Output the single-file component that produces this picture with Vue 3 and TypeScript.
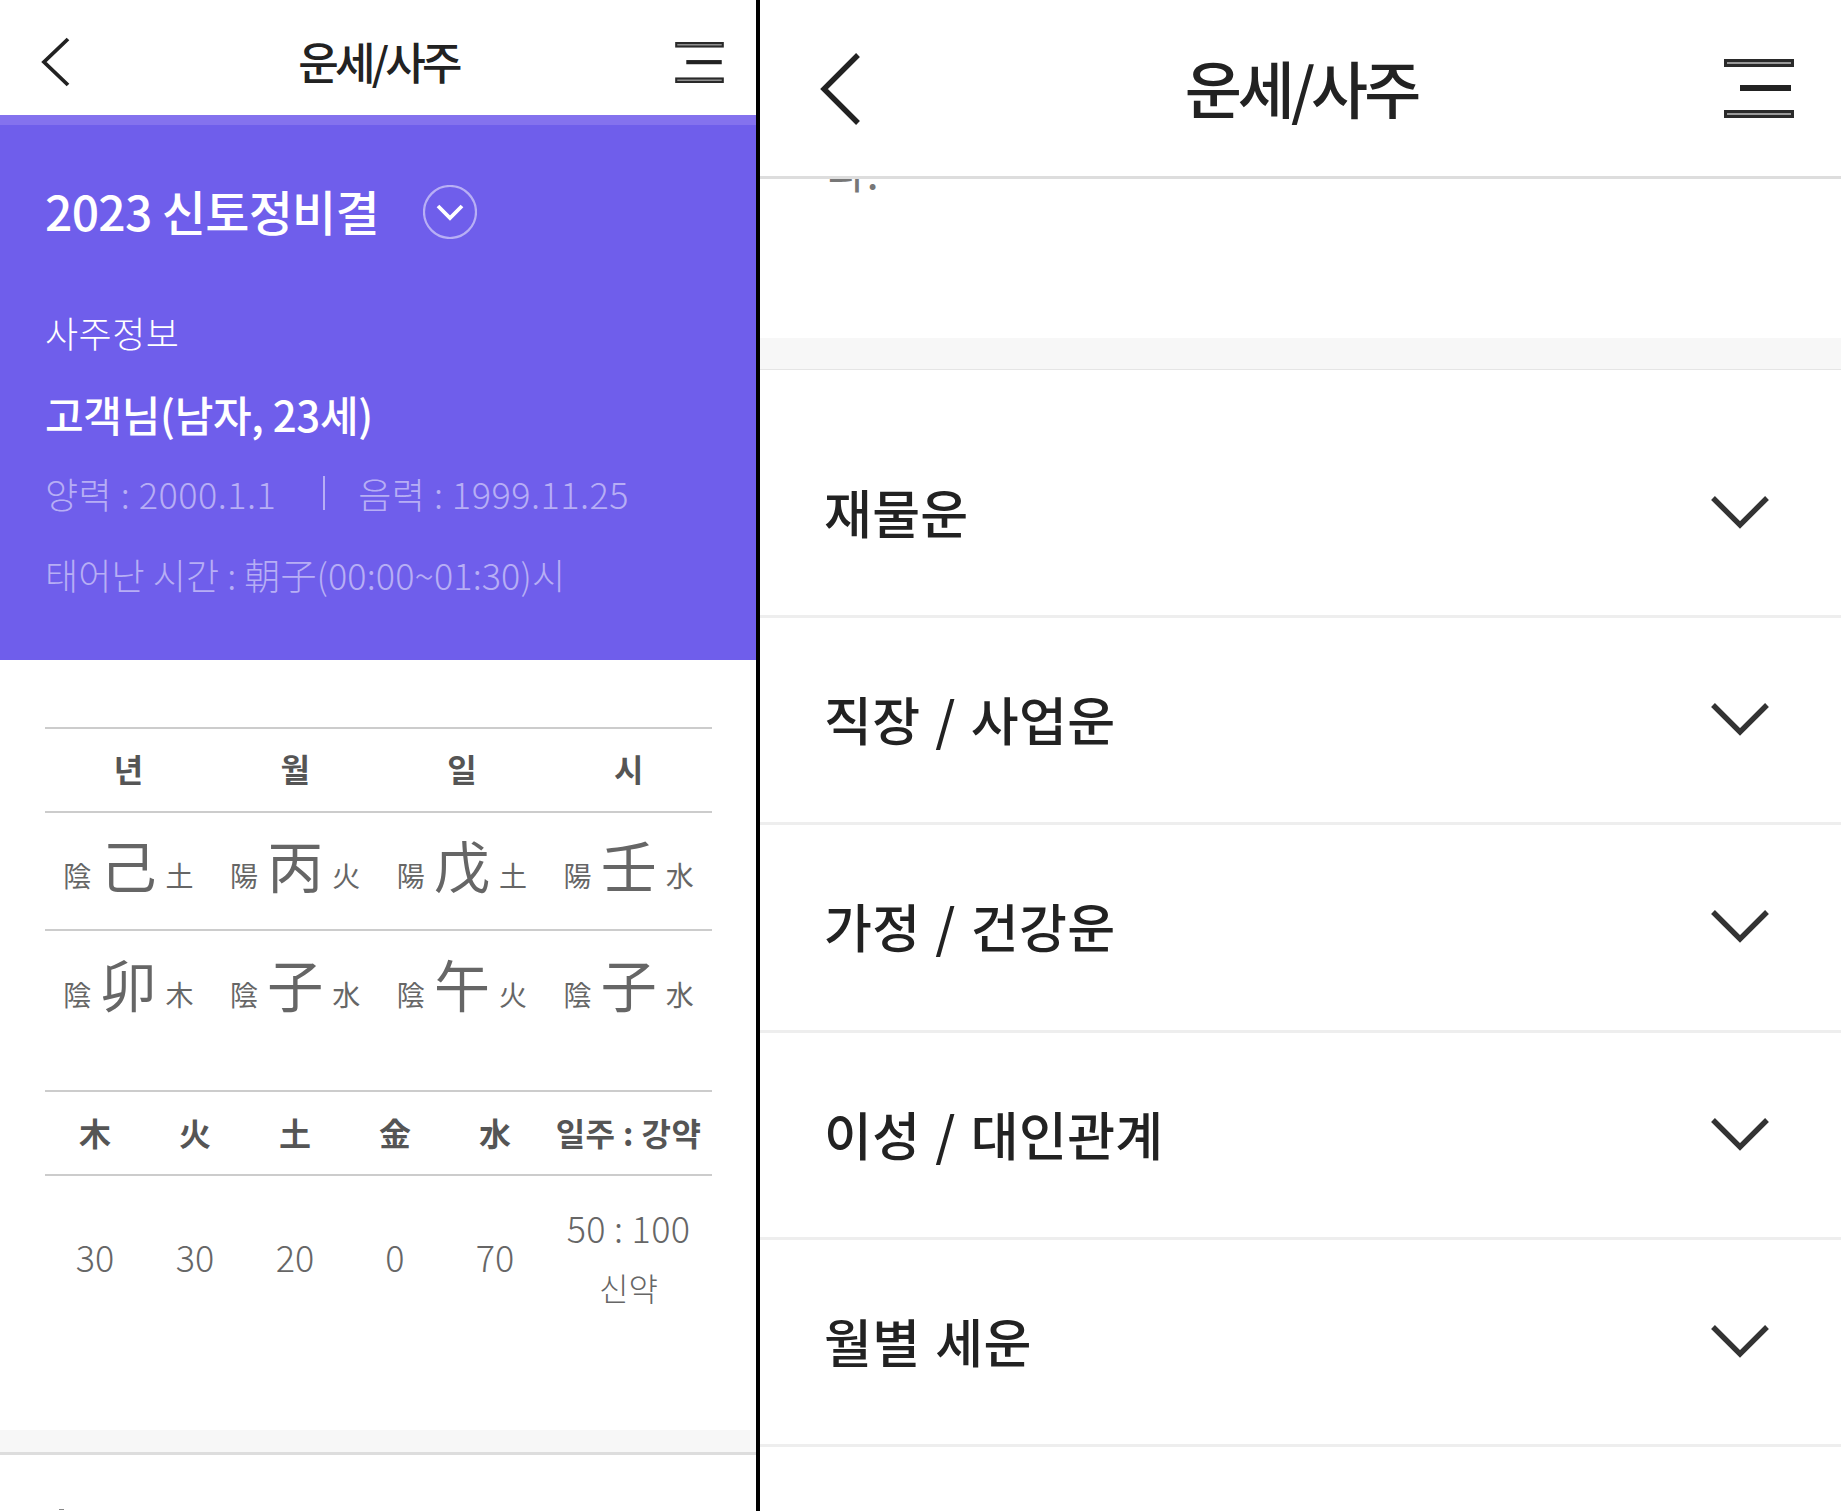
<script setup lang="ts">
interface Pillar { l: string; b: string; e: string }
interface Row { label: string }
const heads: string[] = ['년', '월', '일', '시']
const row1: Pillar[] = [
  { l: '陰', b: '己', e: '土' },
  { l: '陽', b: '丙', e: '火' },
  { l: '陽', b: '戊', e: '土' },
  { l: '陽', b: '壬', e: '水' },
]
const row2: Pillar[] = [
  { l: '陰', b: '卯', e: '木' },
  { l: '陰', b: '子', e: '水' },
  { l: '陰', b: '午', e: '火' },
  { l: '陰', b: '子', e: '水' },
]
const elements: string[] = ['木', '火', '土', '金', '水']
const scores: string[] = ['30', '30', '20', '0', '70']
const rows: Row[] = [
  { label: '재물운' },
  { label: '직장 / 사업운' },
  { label: '가정 / 건강운' },
  { label: '이성 / 대인관계' },
  { label: '월별 세운' },
]
</script>

<template>
  <div class="page">
    <section class="left">
      <header class="head-l">
        <svg class="back-l" viewBox="0 0 30 52" width="30" height="52"><path d="M27 3 L3 26 L27 49" fill="none" stroke="#222" stroke-width="3.8" /></svg>
        <h1 class="title-l">운세/사주</h1>
        <svg class="menu-l" viewBox="0 0 70 59" width="49" height="41">
          <rect x="0" y="0" width="70" height="8" fill="#2a2a2a" /><rect x="3" y="3" width="64" height="2" fill="#999" />
          <rect x="16" y="26" width="51" height="6" fill="#222" />
          <rect x="0" y="51" width="70" height="8" fill="#2a2a2a" /><rect x="3" y="54" width="64" height="2" fill="#999" />
        </svg>
      </header>
      <div class="hero">
        <div class="hero-title">
          <span>2023 신토정비결</span>
          <svg class="circle" viewBox="0 0 54 54" width="54" height="54">
            <circle cx="27" cy="27" r="26" fill="none" stroke="#b8aff5" stroke-width="2.2" />
            <path d="M15 21 L27 33 L39 21" fill="none" stroke="#fff" stroke-width="3.8" />
          </svg>
        </div>
        <p class="hero-label">사주정보</p>
        <p class="hero-name">고객님(남자, 23세)</p>
        <p class="hero-date"><span>양력 : 2000.1.1</span><i class="sep"></i><span>음력 : 1999.11.25</span></p>
        <p class="hero-time">태어난 시간 : 朝子(00:00~01:30)시</p>
      </div>
      <div class="pillars">
        <div class="p-head"><div v-for="h in heads" :key="h">{{ h }}</div></div>
        <div class="p-row first">
          <div v-for="(p, i) in row1" :key="i" class="cell"><span class="sm">{{ p.l }}</span><span class="big">{{ p.b }}</span><span class="sm">{{ p.e }}</span></div>
        </div>
        <div class="p-row second">
          <div v-for="(p, i) in row2" :key="i" class="cell"><span class="sm">{{ p.l }}</span><span class="big">{{ p.b }}</span><span class="sm">{{ p.e }}</span></div>
        </div>
      </div>
      <div class="elements">
        <div class="e-head">
          <div v-for="e in elements" :key="e">{{ e }}</div>
          <div class="e-last">일주 : 강약</div>
        </div>
        <div class="e-row">
          <div v-for="(s, i) in scores" :key="i">{{ s }}</div>
          <div class="e-stack"><span class="ratio">50 : 100</span><span class="weak">신약</span></div>
        </div>
      </div>
      <div class="band band-l"></div>
      <div class="tick"></div>
    </section>
    <section class="right">
      <header class="head-r">
        <svg class="back-r" viewBox="0 0 42 72" width="42" height="72"><path d="M38 2 L4 36 L38 70" fill="none" stroke="#222" stroke-width="5.4" /></svg>
        <h1 class="title-r">운세/사주</h1>
        <svg class="menu-r" viewBox="0 0 70 59" width="70" height="59">
          <rect x="0" y="0" width="70" height="8" fill="#2a2a2a" /><rect x="3" y="3" width="64" height="2" fill="#999" />
          <rect x="16" y="26" width="51" height="6" fill="#222" />
          <rect x="0" y="51" width="70" height="8" fill="#2a2a2a" /><rect x="3" y="54" width="64" height="2" fill="#999" />
        </svg>
      </header>
      <div class="clip"><p class="clip-text">다.</p></div>
      <div class="band band-r"></div>
      <div class="acc">
        <div v-for="r in rows" :key="r.label" class="acc-row">
          <span class="acc-label">{{ r.label }}</span>
          <svg class="chev" viewBox="0 0 60 34" width="60" height="34"><path d="M3 3 L30 30 L57 3" fill="none" stroke="#333" stroke-width="5.4" /></svg>
        </div>
      </div>
    </section>
  </div>
</template>

<style>
html, body { margin: 0; background: #fff; }
</style>

<style scoped>
* { box-sizing: border-box; }
p, h1 { margin: 0; font-weight: inherit; }
.page {
  display: flex;
  width: 1841px;
  height: 1511px;
  overflow: hidden;
  background: #fff;
  font-family: "Noto Sans CJK KR", "Noto Sans", sans-serif;
  color: #222;
}
.left { width: 756px; flex: none; }
.right { flex: 1; border-left: 4px solid #000; min-width: 0; }

.head-l { height: 115px; display: flex; align-items: center; padding: 9px 32px 0 41px; justify-content: space-between; }
.title-l { font-size: 44px; font-weight: 500; letter-spacing: -3.7px; line-height: 60px; margin: -2px 0 0 11px; }
.hero { background: #6f5eeb; border-top: 10px solid #8472ee; padding: 55px 45px 56px; color: #fff; }
.hero-title { display: flex; align-items: center; gap: 44px; font-size: 48px; line-height: 60px; letter-spacing: -0.7px; font-weight: 500; }
.circle { flex: none; margin-top: 4px; }
.hero-label { margin-top: 67px; font-size: 36px; line-height: 50px; font-weight: 300; letter-spacing: 0.5px; }
.hero-name { margin-top: 27px; font-size: 42px; line-height: 60px; font-weight: 500; letter-spacing: -0.3px; }
.hero-date, .hero-time { font-size: 36px; line-height: 60px; font-weight: 300; color: #b7aef5; }
.hero-date { margin-top: 19px; display: flex; align-items: center; letter-spacing: 0.5px; }
.hero-time { margin-top: 21px; letter-spacing: 0.1px; }
.sep { width: 2px; height: 34px; background: #b7aef5; margin: 0 33px 0 47px; }

.pillars { margin: 67px 44px 0 45px; border-top: 2px solid #ccc; height: 363px; }
.p-head, .p-row { display: grid; grid-template-columns: repeat(4, 1fr); }
.p-head { height: 84px; border-bottom: 2px solid #ccc; font-size: 32px; font-weight: 700; color: #555; text-align: center; line-height: 78px; }
.p-row.first { height: 118px; border-bottom: 2px solid #ccc; padding-top: 1px; }
.p-row.second { height: 118px; padding-top: 1px; }
.cell { display: flex; align-items: center; justify-content: center; color: #666; gap: 9px; }
.sm { font-size: 28px; line-height: 1; margin-top: 7px; font-weight: 400; }
.big { font-size: 56px; line-height: 1; margin: -4px 0 12px; font-weight: 400; }

.elements { margin: 0 44px 0 45px; border-top: 2px solid #ccc; height: 341px; }
.e-head, .e-row { display: grid; grid-template-columns: repeat(5, 100px) 1fr; text-align: center; }
.e-head { height: 84px; border-bottom: 2px solid #ccc; font-size: 32px; font-weight: 700; color: #555; line-height: 80px; }
.e-last { letter-spacing: 0.4px; white-space: nowrap; }
.e-row { height: 170px; align-items: center; font-size: 36px; font-weight: 300; color: #666; padding-bottom: 10px; }
.e-stack { display: flex; flex-direction: column; line-height: 60px; margin-top: 3px; }
.ratio { letter-spacing: 0.3px; margin-top: -1px; }
.weak { font-size: 32px; }

.band { background: #f7f7f7; }
.band-l { height: 25px; border-bottom: 3px solid #ddd; margin-top: -1px; }
.tick { width: 5px; height: 1px; background: #888; margin: 54px 0 0 59px; }

.head-r { height: 179px; border-bottom: 3px solid #ddd; display: flex; align-items: center; justify-content: space-between; padding: 1px 47px 0 60px; }
.title-r { font-size: 62px; font-weight: 500; letter-spacing: -4px; line-height: 80px; margin: -4px 0 0 16px; }
.clip { height: 159px; overflow: hidden; }
.clip-text { font-size: 44px; line-height: 60px; color: #777; margin: -39px 0 0 66px; }
.band-r { height: 32px; border-bottom: 1px solid #e5e5e5; }
.acc-row { height: 207.25px; border-bottom: 3px solid #eee; display: flex; align-items: center; justify-content: space-between; padding: 0 71px 0 64px; font-size: 52px; font-weight: 500; letter-spacing: 0.3px; word-spacing: 3px; color: #222; }
.acc-row:first-child { height: 248px; padding-top: 40px; }
.acc-label { margin-bottom: 3px; }
.chev { margin-bottom: 2px; }
</style>
